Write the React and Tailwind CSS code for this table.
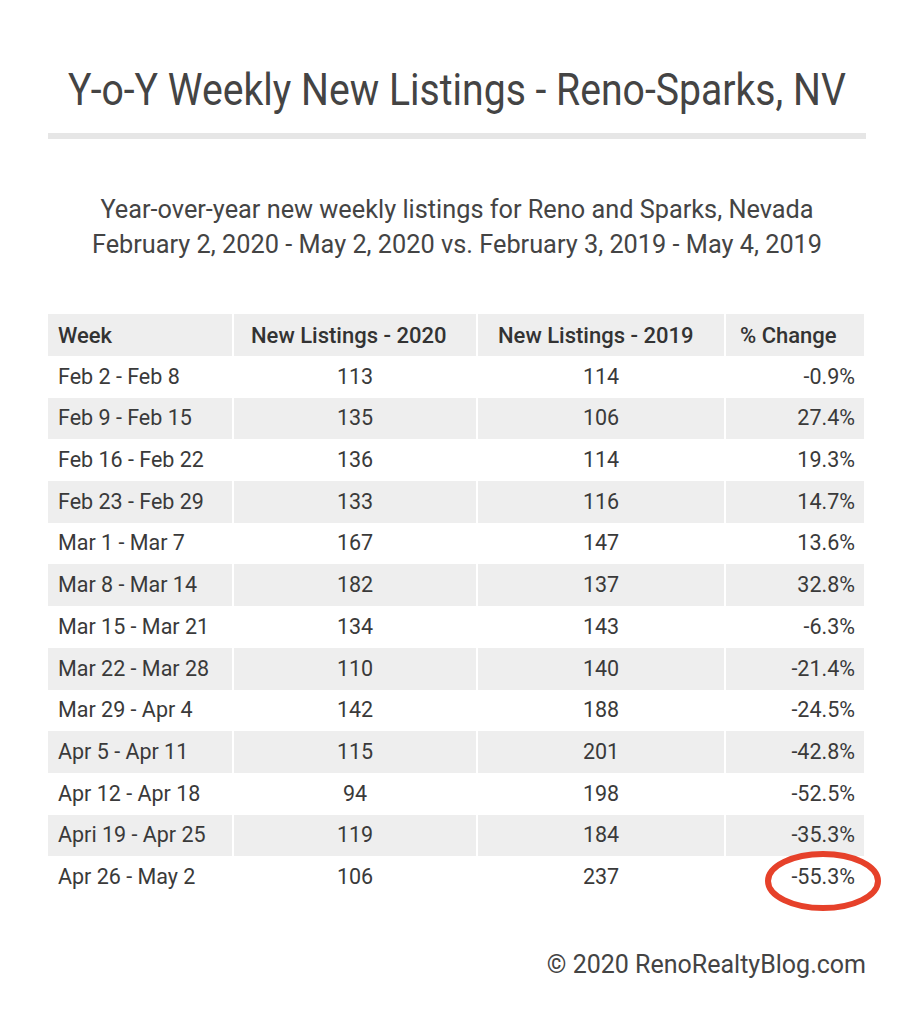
const rows = [
  ['Feb 2 - Feb 8', '113', '114', '-0.9%'],
  ['Feb 9 - Feb 15', '135', '106', '27.4%'],
  ['Feb 16 - Feb 22', '136', '114', '19.3%'],
  ['Feb 23 - Feb 29', '133', '116', '14.7%'],
  ['Mar 1 - Mar 7', '167', '147', '13.6%'],
  ['Mar 8 - Mar 14', '182', '137', '32.8%'],
  ['Mar 15 - Mar 21', '134', '143', '-6.3%'],
  ['Mar 22 - Mar 28', '110', '140', '-21.4%'],
  ['Mar 29 - Apr 4', '142', '188', '-24.5%'],
  ['Apr 5 - Apr 11', '115', '201', '-42.8%'],
  ['Apr 12 - Apr 18', '94', '198', '-52.5%'],
  ['Apri 19 - Apr 25', '119', '184', '-35.3%'],
  ['Apr 26 - May 2', '106', '237', '-55.3%'],
];

const cols = 'grid grid-cols-[184px_242px_246px_138px] gap-x-[2px]';

export default function App() {
  return (
    <main className="w-[914px] h-[1024px] bg-white text-[#3a3a3a] font-['Roboto',sans-serif]">
      <div className="px-[48px]">
        <h1 className="pt-[62px] flex justify-center text-[45px] leading-[56px] text-[#444] whitespace-nowrap">
          <span className="shrink-0 scale-x-[0.87]">Y-o-Y Weekly New Listings - Reno-Sparks, NV</span>
        </h1>
        <div className="mt-[15px] h-[6px] bg-[#e6e6e6]" />

        <div className="mt-[53px] text-center text-[25.3px] leading-[35px] text-[#444] whitespace-nowrap">
          <p>Year-over-year new weekly listings for Reno and Sparks, Nevada</p>
          <p>February 2, 2020 - May 2, 2020 vs. February 3, 2019 - May 4, 2019</p>
        </div>

        <div className="mt-[52px] w-[816px] text-[21.5px]">
          <div className={`${cols} h-[42px] font-medium text-[#333] text-[22px]`}>
            <div className="bg-[#eeeeee] pl-[10px] flex items-center">Week</div>
            <div className="bg-[#eeeeee] pl-[17px] flex items-center">New Listings - 2020</div>
            <div className="bg-[#eeeeee] pl-[20px] flex items-center">New Listings - 2019</div>
            <div className="bg-[#eeeeee] pl-[14px] flex items-center">% Change</div>
          </div>
          {rows.map((r, i) => (
            <div key={r[0]} className={`${cols} h-[41.7px]`}>
              <div className={`${i % 2 ? 'bg-[#eeeeee]' : ''} pl-[10px] flex items-center`}>{r[0]}</div>
              <div className={`${i % 2 ? 'bg-[#eeeeee]' : ''} flex items-center justify-center`}>{r[1]}</div>
              <div className={`${i % 2 ? 'bg-[#eeeeee]' : ''} flex items-center justify-center`}>{r[2]}</div>
              <div className={`${i % 2 ? 'bg-[#eeeeee]' : ''} relative pr-[9px] flex items-center justify-end`}>
                {r[3]}
                {i === rows.length - 1 && (
                  <svg className="absolute left-[38px] top-[-6px]" width="118" height="62" viewBox="0 0 118 62">
                    <ellipse cx="59" cy="31" rx="55" ry="27" fill="none" stroke="#e6412a" strokeWidth="6" />
                  </svg>
                )}
              </div>
            </div>
          ))}
        </div>

        <p className="mt-[52px] text-right text-[25px] leading-[30px] text-[#444]">© 2020 RenoRealtyBlog.com</p>
      </div>
    </main>
  );
}
